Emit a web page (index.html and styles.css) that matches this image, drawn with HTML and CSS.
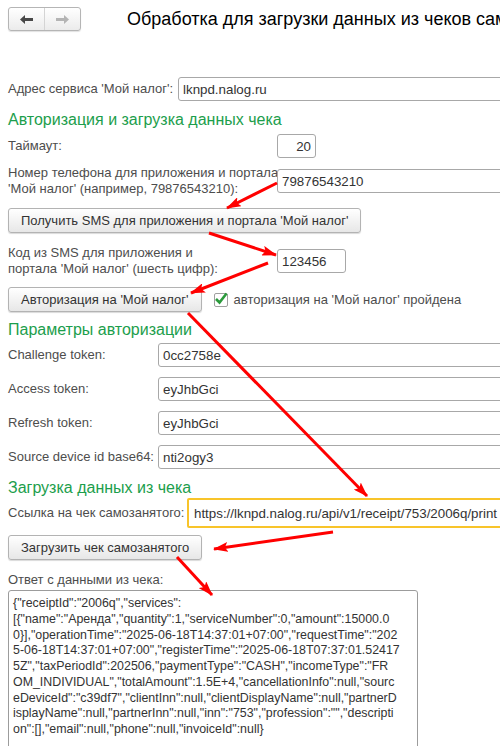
FILE: index.html
```html
<!DOCTYPE html>
<html lang="ru">
<head>
    <meta charset="UTF-8">
    <meta name="viewport" content="width=device-width, initial-scale=1.0">
    <title>Обработка для загрузки данных из чеков самозанятых</title>
    <link rel="stylesheet" href="styles.css">
</head>
<body>
    <div class="topbar">
        <div class="nav">
            <span class="nav-btn">
                <svg width="13" height="9" viewBox="0 0 13 9"><path d="M0 4.5 L5 0 L5 3 L13 3 L13 6 L5 6 L5 9 Z" fill="#484848"/></svg>
            </span>
            <span class="nav-btn">
                <svg width="13" height="9" viewBox="0 0 13 9"><path d="M13 4.5 L8 0 L8 3 L0 3 L0 6 L8 6 L8 9 Z" fill="#b4b4b4"/></svg>
            </span>
        </div>
        <h1 class="title">Обработка для загрузки данных из чеков самозанятых</h1>
    </div>

    <div class="form">
        <div class="row row-address">
            <label class="lbl lbl-address">Адрес сервиса 'Мой налог':</label>
            <input class="field field-wide" type="text" value="lknpd.nalog.ru">
        </div>

        <h2 class="section section-auth">Авторизация и загрузка данных чека</h2>
        <div class="row row-timeout">
            <label class="lbl lbl-auth">Таймаут:</label>
            <input class="field field-timeout" type="text" value="20">
        </div>
        <div class="row row-phone">
            <label class="lbl lbl-auth">Номер телефона для приложения и портала<br>'Мой налог' (например, 79876543210):</label>
            <input class="field field-wide" type="text" value="79876543210">
        </div>
        <button class="btn btn-sms">Получить SMS для приложения и портала 'Мой налог'</button>
        <div class="row row-code">
            <label class="lbl lbl-auth">Код из SMS для приложения и<br>портала 'Мой налог' (шесть цифр):</label>
            <input class="field field-code" type="text" value="123456">
        </div>
        <div class="row row-login">
            <button class="btn">Авторизация на 'Мой налог'</button>
            <span class="check">
                <svg width="16" height="14" viewBox="0 0 16 14"><path d="M3 7 L6.5 10.5 L13.5 1.5" fill="none" stroke="#2b9a3c" stroke-width="2.6"/></svg>
            </span>
            <span class="check-text">авторизация на 'Мой налог' пройдена</span>
        </div>

        <h2 class="section section-params">Параметры авторизации</h2>
        <div class="tokens">
            <div class="row">
                <label class="lbl lbl-token">Challenge token:</label>
                <input class="field field-wide" type="text" value="0cc2758e">
            </div>
            <div class="row">
                <label class="lbl lbl-token">Access token:</label>
                <input class="field field-wide" type="text" value="eyJhbGci">
            </div>
            <div class="row">
                <label class="lbl lbl-token">Refresh token:</label>
                <input class="field field-wide" type="text" value="eyJhbGci">
            </div>
            <div class="row">
                <label class="lbl lbl-token">Source device id base64:</label>
                <input class="field field-wide" type="text" value="nti2ogy3">
            </div>
        </div>

        <h2 class="section section-load">Загрузка данных из чека</h2>
        <div class="row">
            <label class="lbl lbl-link">Ссылка на чек самозанятого:</label>
            <input class="field field-wide field-focus" type="text" value="https://lknpd.nalog.ru/api/v1/receipt/753/2006q/print">
        </div>
        <button class="btn btn-load">Загрузить чек самозанятого</button>
        <div class="lbl lbl-answer">Ответ с данными из чека:</div>
        <textarea class="response" readonly>{"receiptId":"2006q","services":
[{"name":"Аренда","quantity":1,"serviceNumber":0,"amount":15000.0
0}],"operationTime":"2025-06-18T14:37:01+07:00","requestTime":"202
5-06-18T14:37:01+07:00","registerTime":"2025-06-18T07:37:01.52417
5Z","taxPeriodId":202506,"paymentType":"CASH","incomeType":"FR
OM_INDIVIDUAL","totalAmount":1.5E+4,"cancellationInfo":null,"sourc
eDeviceId":"c39df7","clientInn":null,"clientDisplayName":null,"partnerD
isplayName":null,"partnerInn":null,"inn":"753","profession":"","descripti
on":[],"email":null,"phone":null,"invoiceId":null}</textarea>
    </div>

    <!-- пометки красными стрелками поверх формы -->
    <svg class="arrows" width="500" height="746" viewBox="0 0 500 746">
        <defs>
            <marker id="head" markerWidth="15" markerHeight="10" refX="14" refY="5" orient="auto" markerUnits="userSpaceOnUse">
                <path d="M0 0 L15 5 L0 10 L3 5 Z" fill="#f00"/>
            </marker>
        </defs>
        <g stroke="#f00" stroke-width="3" marker-end="url(#head)">
            <line x1="277" y1="183" x2="227" y2="208"/>
            <line x1="209" y1="233" x2="276" y2="255"/>
            <line x1="268" y1="263" x2="191" y2="293"/>
            <line x1="188" y1="313" x2="367" y2="496"/>
            <line x1="333" y1="532" x2="214" y2="549"/>
            <line x1="177" y1="557" x2="212" y2="595"/>
        </g>
    </svg>
</body>
</html>
```

FILE: styles.css
```css
html, body {
    overflow: hidden;
}
body {
    position: relative;
    height: 746px;
    box-sizing: border-box;
    margin: 0;
    padding: 7px 8px 0;
    background: #fff;
    font-family: "Liberation Sans", Arial, sans-serif;
    font-size: 13px;
    color: #4d4d4d;
}
.topbar {
    display: flex;
    align-items: center;
    height: 24px;
}
.nav {
    display: flex;
    flex: none;
    width: 73px;
    height: 24px;
    box-sizing: border-box;
    border: 1px solid #b5b5b5;
    border-radius: 3px;
    background: linear-gradient(#ffffff, #ebebeb);
    box-shadow: 0 1px 1px rgba(0,0,0,0.12);
}
.nav-btn {
    display: flex;
    flex: 1;
    align-items: center;
    justify-content: center;
}
.nav-btn + .nav-btn {
    border-left: 1px solid #d4d4d4;
}
.title {
    margin: 0 0 0 46px;
    font-size: 18px;
    font-weight: normal;
    color: #000;
    white-space: nowrap;
}
.form {
    display: flex;
    flex-direction: column;
    align-items: flex-start;
    width: 620px;
    margin-top: 46px;
}
.row {
    display: flex;
    align-items: center;
    align-self: stretch;
}
.lbl {
    flex: none;
    line-height: 16px;
    white-space: nowrap;
}
.lbl-address { width: 170px; }
.lbl-auth { width: 269px; }
.lbl-token { width: 150px; }
.lbl-link { width: 179px; }
.field {
    height: 24px;
    box-sizing: border-box;
    margin: 0;
    padding: 0 4px;
    border: 1px solid #a8a8a8;
    border-radius: 3px;
    background: #fff;
    font: inherit;
    font-size: 13.33px;
    color: #333;
    outline: none;
}
.field-wide { flex: 1; }
.field-timeout {
    width: 39px;
    text-align: right;
}
.field-code { width: 69px; }
.field-focus {
    height: 30px;
    padding-left: 5px;
    border: 2px solid #f8c42a;
    border-radius: 2px;
}
.section {
    margin: 9px 0 0;
    font-size: 16px;
    font-weight: normal;
    line-height: 20px;
    color: #1c9e4c;
}
.section-params { margin-top: 8px; }
.row-timeout { margin-top: 4px; }
.row-phone { margin-top: 7px; }
.row-code { margin-top: 12px; }
.row-login { margin-top: 10px; }
.btn {
    height: 25px;
    margin: 0;
    padding: 0 12px;
    border: 1px solid #b3b3b3;
    border-radius: 3px;
    background: linear-gradient(#ffffff, #e7e7e7);
    box-shadow: 0 1px 1px rgba(0,0,0,0.15);
    font: inherit;
    color: #333;
    cursor: pointer;
}
.btn-sms { margin-top: 11px; }
.btn-load { margin-top: 7px; }
.check {
    display: flex;
    align-items: center;
    justify-content: center;
    width: 14px;
    height: 14px;
    box-sizing: border-box;
    margin-left: 12px;
    border: 1px solid #a0a0a0;
    border-radius: 2px;
    background: #fff;
}
.check svg {
    flex: none;
    margin-top: -1px;
}
.check-text {
    margin-left: 6px;
}
.tokens {
    display: flex;
    flex-direction: column;
    gap: 10px;
    align-self: stretch;
    margin-top: 3px;
}
.lbl-answer {
    margin-top: 12px;
}
.response {
    display: block;
    width: 410px;
    height: 200px;
    box-sizing: border-box;
    margin-top: 2px;
    padding: 5px 4px;
    border: 1px solid #9c9c9c;
    border-radius: 3px;
    font: inherit;
    font-size: 12.4px;
    line-height: 15.75px;
    color: #333;
    white-space: pre;
    resize: none;
    overflow: hidden;
}
.arrows {
    position: absolute;
    left: 0;
    top: 0;
    pointer-events: none;
}
```
